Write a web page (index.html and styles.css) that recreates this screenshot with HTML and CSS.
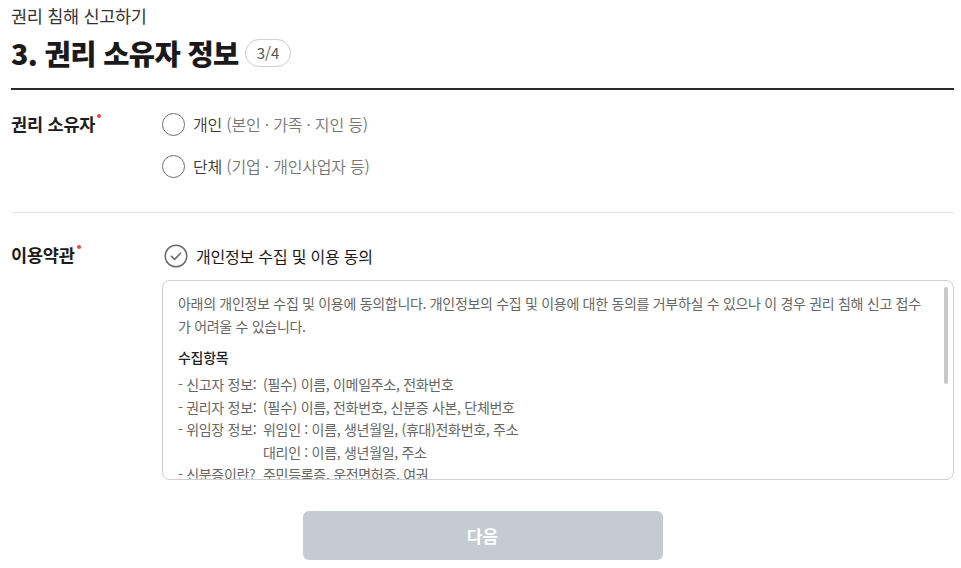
FILE: index.html
```html
<!DOCTYPE html>
<html lang="ko">
<head>
<meta charset="utf-8">
<title>권리 침해 신고하기</title>
<link rel="stylesheet" href="styles.css">
</head>
<body>
<main class="page">
  <header class="head">
    <p class="eyebrow">권리 침해 신고하기</p>
    <h1 class="title">3. 권리 소유자 정보 <span class="step">3/4</span></h1>
  </header>

  <section class="row row-owner">
    <div class="label">권리 소유자<span class="req"></span></div>
    <div class="field">
      <label class="radio"><span class="circle"></span><span class="opt">개인</span>&nbsp;<span class="hint">(본인 · 가족 · 지인 등)</span></label>
      <label class="radio"><span class="circle"></span><span class="opt">단체</span>&nbsp;<span class="hint">(기업 · 개인사업자 등)</span></label>
    </div>
  </section>

  <section class="row row-terms">
    <div class="label">이용약관<span class="req"></span></div>
    <div class="field">
      <label class="check">
        <svg class="check-icon" width="24" height="24" viewBox="0 0 24 24"><circle cx="12" cy="12" r="10.8" fill="none" stroke="#6b6e75" stroke-width="1.5"/><path d="M7.4 12.3l3.2 3.1 5.9-6.2" fill="none" stroke="#6b6e75" stroke-width="1.6" stroke-linecap="round" stroke-linejoin="round"/></svg>
        <span class="check-text">개인정보 수집 및 이용 동의</span>
      </label>
      <div class="terms">
        <div class="terms-body">
          <p class="intro">아래의 개인정보 수집 및 이용에 동의합니다. 개인정보의 수집 및 이용에 대한 동의를 거부하실 수 있으나 이 경우 권리 침해 신고 접수가 어려울 수 있습니다.</p>
          <h2 class="sub">수집항목</h2>
          <dl class="items">
            <dt>- 신고자 정보:</dt><dd>(필수) 이름, 이메일주소, 전화번호</dd>
            <dt>- 권리자 정보:</dt><dd>(필수) 이름, 전화번호, 신분증 사본, 단체번호</dd>
            <dt>- 위임장 정보:</dt><dd>위임인 : 이름, 생년월일, (휴대)전화번호, 주소</dd>
            <dt></dt><dd>대리인 : 이름, 생년월일, 주소</dd>
            <dt>- 신분증이란?</dt><dd>주민등록증, 운전면허증, 여권</dd>
          </dl>
          <h2 class="sub">수집 및 이용목적</h2>
          <p class="para">- 권리 침해 신고 접수 및 처리, 신고자 및 권리자 본인 확인, 처리 결과 안내</p>
        </div>
        <span class="thumb"></span>
      </div>
    </div>
  </section>

  <div class="actions">
    <button class="next" type="button" disabled>다음</button>
  </div>
</main>
</body>
</html>
```

FILE: styles.css
```css
* { box-sizing: border-box; }
html, body { margin: 0; padding: 0; background: #fff; }
body {
  font-family: "Noto Sans CJK KR", "Noto Sans", sans-serif;
  color: #222;
}
.page { padding: 0 7px 0 11px; }

.head { padding-top: 5px; border-bottom: 2px solid #2b2b2b; padding-bottom: 17px; }
.eyebrow { margin: 0; font-size: 17.5px; line-height: 22px; color: #333; font-weight: 400; letter-spacing: -0.3px; }
.title {
  margin: 8px 0 0; font-size: 28.5px; line-height: 36px; font-weight: 800; color: #1a1a1a;
  display: flex; align-items: center; gap: 6px; letter-spacing: -0.6px;
}
.step {
  display: inline-flex; align-items: center; justify-content: center;
  height: 28px; padding: 0 11px; border: 1px solid #cfcfcf; border-radius: 14px;
  font-size: 15px; font-weight: 400; color: #555; letter-spacing: 0;
}

.row { display: flex; }
.label {
  width: 151px; flex: none; font-size: 17.5px; font-weight: 700; color: #1d1d1d;
  line-height: 24px; letter-spacing: -0.2px;
}
.req {
  display: inline-block; width: 4px; height: 4px; border-radius: 50%; background: #f0443a;
  vertical-align: top; margin: 2px 0 0 2px;
}
.field { flex: 1; min-width: 0; }

.row-owner { padding: 21px 0 33px; border-bottom: 1px solid #e6e6e6; }
.row-owner .label { margin-top: 1px; }
.radio { display: flex; align-items: center; height: 26px; font-size: 16px; font-weight: 350; color: #444; letter-spacing: -0.2px; }
.radio + .radio { margin-top: 16px; }
.circle {
  width: 23px; height: 23px; border-radius: 50%; border: 1.5px solid #6b6e75; flex: none; margin-right: 8px;
}
.opt { color: #3a3a3a; }
.hint { color: #777; }

.row-terms { padding-top: 30px; }
.check { display: flex; align-items: center; height: 26px; padding-left: 2px; }
.check-icon { flex: none; margin-right: 8px; }
.check-text { font-size: 16px; color: #1a1a1a; font-weight: 400; letter-spacing: -0.2px; }

.terms {
  position: relative;
  margin-top: 11px; height: 200px; overflow: hidden;
  border: 1px solid #cfcfcf; border-radius: 8px;
}
.terms-body {
  padding: 11px 20px 10px 15px;
  font-size: 14px; line-height: 22.5px; color: #666; letter-spacing: -0.3px;
}
.thumb {
  position: absolute; top: 6px; right: 5px; width: 4px; height: 97px;
  background: #c9c9c9; border-radius: 2px;
}
.intro { margin: 0; }
.sub { margin: 8px 0 0; font-size: 14px; font-weight: 500; color: #222; line-height: 24px; }
.items { margin: 4px 0 0; display: grid; grid-template-columns: 85px 1fr; }
.items dt, .items dd { margin: 0; }
.para { margin: 2px 0 0; }

.actions { display: flex; justify-content: center; padding-top: 31px; }
.next {
  width: 360px; height: 49px; border: 0; border-radius: 6px; background: #c5cbd2;
  color: #fff; font-family: inherit; font-size: 17px; font-weight: 700;
}
```
